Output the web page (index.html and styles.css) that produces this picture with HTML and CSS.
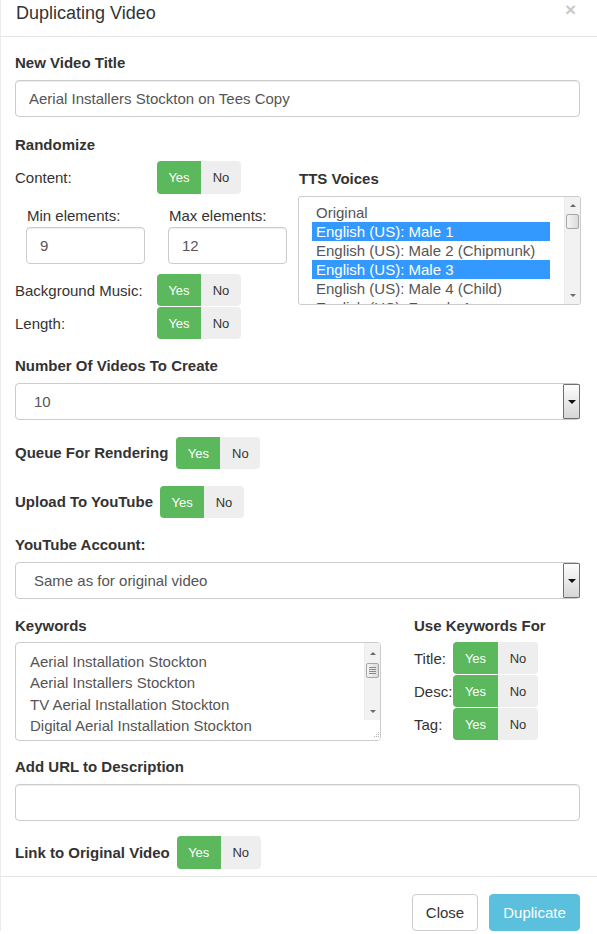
FILE: index.html
```html
<!DOCTYPE html>
<html lang="en">
<head>
<meta charset="utf-8">
<title>Duplicating Video</title>
<link rel="stylesheet" href="styles.css">
</head>
<body>
<div class="modal">
  <div class="modal-header">
    <h4 class="modal-title">Duplicating Video</h4>
    <span class="close">×</span>
  </div>
  <div class="modal-body">
    <div class="label">New Video Title</div>
    <input class="input" type="text" value="Aerial Installers Stockton on Tees Copy">

    <div class="randomize">
      <div class="rand-left">
        <div class="label">Randomize</div>
        <div class="opt-row content-row">
          <span class="row-label">Content:</span>
          <span class="toggle"><span class="yes">Yes</span><span class="no">No</span></span>
        </div>
        <div class="minmax">
          <div class="mm-col">
            <div class="mm-label">Min elements:</div>
            <input class="input small" type="text" value="9">
          </div>
          <div class="mm-col">
            <div class="mm-label">Max elements:</div>
            <input class="input small" type="text" value="12">
          </div>
        </div>
        <div class="opt-row bg-row">
          <span class="row-label">Background Music:</span>
          <span class="toggle"><span class="yes">Yes</span><span class="no">No</span></span>
        </div>
        <div class="opt-row len-row">
          <span class="row-label">Length:</span>
          <span class="toggle"><span class="yes">Yes</span><span class="no">No</span></span>
        </div>
      </div>
      <div class="rand-right">
        <div class="label tts-label">TTS Voices</div>
        <div class="listbox">
          <div class="options">
            <div class="option">Original</div>
            <div class="option selected">English (US): Male 1</div>
            <div class="option">English (US): Male 2 (Chipmunk)</div>
            <div class="option selected">English (US): Male 3</div>
            <div class="option">English (US): Male 4 (Child)</div>
            <div class="option">English (US): Female 1</div>
          </div>
          <div class="scrollbar">
            <div class="sb-up"><span class="arrow-up"></span></div>
            <div class="sb-thumb"></div>
            <div class="sb-track"></div>
            <div class="sb-down"><span class="arrow-down"></span></div>
          </div>
        </div>
      </div>
    </div>

    <div class="label section">Number Of Videos To Create</div>
    <div class="select">
      <span class="select-text">10</span>
      <span class="drop-btn"><span class="arrow-down dark"></span></span>
    </div>

    <div class="inline-row queue-row">
      <span class="label">Queue For Rendering</span>
      <span class="toggle"><span class="yes">Yes</span><span class="no">No</span></span>
    </div>

    <div class="inline-row upload-row">
      <span class="label">Upload To YouTube</span>
      <span class="toggle"><span class="yes">Yes</span><span class="no">No</span></span>
    </div>

    <div class="label section">YouTube Account:</div>
    <div class="select">
      <span class="select-text">Same as for original video</span>
      <span class="drop-btn"><span class="arrow-down dark"></span></span>
    </div>

    <div class="keywords">
      <div class="kw-left">
        <div class="label">Keywords</div>
        <div class="textarea">
          <div class="lines">
            <div class="line">Aerial Installation Stockton</div>
            <div class="line">Aerial Installers Stockton</div>
            <div class="line">TV Aerial Installation Stockton</div>
            <div class="line">Digital Aerial Installation Stockton</div>
          </div>
          <div class="ta-scroll">
            <div class="ta-bar">
              <div class="sb-up tall"><span class="arrow-up"></span></div>
              <div class="sb-thumb grip"><i></i><i></i><i></i><i></i></div>
              <div class="sb-track"></div>
              <div class="sb-down"><span class="arrow-down"></span></div>
            </div>
            <div class="resize-corner">
              <svg width="10" height="10" viewBox="0 0 10 10"><g fill="#b5b5b5"><rect x="8" y="2" width="1" height="1"/><rect x="6" y="4" width="1" height="1"/><rect x="8" y="4" width="1" height="1"/><rect x="4" y="6" width="1" height="1"/><rect x="6" y="6" width="1" height="1"/><rect x="8" y="6" width="1" height="1"/></g></svg>
            </div>
          </div>
        </div>
      </div>
      <div class="kw-right">
        <div class="label">Use Keywords For</div>
        <div class="kw-rows">
          <div class="kw-row">
            <span class="kw-label">Title:</span>
            <span class="toggle"><span class="yes">Yes</span><span class="no">No</span></span>
          </div>
          <div class="kw-row">
            <span class="kw-label">Desc:</span>
            <span class="toggle"><span class="yes">Yes</span><span class="no">No</span></span>
          </div>
          <div class="kw-row">
            <span class="kw-label">Tag:</span>
            <span class="toggle"><span class="yes">Yes</span><span class="no">No</span></span>
          </div>
        </div>
      </div>
    </div>

    <div class="label url-label">Add URL to Description</div>
    <input class="input" type="text" value="">

    <div class="inline-row link-row">
      <span class="label">Link to Original Video</span>
      <span class="toggle tall"><span class="yes">Yes</span><span class="no">No</span></span>
    </div>
  </div>
  <div class="modal-footer">
    <button class="btn btn-default" type="button">Close</button>
    <button class="btn btn-info" type="button">Duplicate</button>
  </div>
</div>
</body>
</html>
```

FILE: styles.css
```css
* { box-sizing: border-box; }

body {
  margin: 0;
  background: #fff;
  color: #333;
  font-family: "Liberation Sans", Arial, sans-serif;
  font-size: 15px;
}

.modal {
  width: 597px;
  border-left: 1px solid #ececec;
}

.modal-header {
  height: 37px;
  display: flex;
  justify-content: space-between;
  align-items: flex-start;
  padding: 3px 21px 0 15px;
  border-bottom: 1px solid #e5e5e5;
}

.modal-title {
  margin: 0;
  font-size: 18px;
  font-weight: normal;
  line-height: 20px;
  color: #333;
}

.close {
  font-size: 19px;
  font-weight: bold;
  line-height: 14px;
  color: #c9c9c9;
  margin-top: 0;
}

.modal-body {
  padding: 16px 17px 7px 14px;
}

.label {
  font-weight: bold;
  font-size: 15px;
  line-height: 20px;
  color: #333;
}

.input {
  display: block;
  width: 100%;
  height: 37px;
  margin: 7px 0 0;
  padding: 0 13px;
  border: 1px solid #ccc;
  border-radius: 4px;
  font: inherit;
  font-size: 15px;
  color: #555;
  background: #fff;
  box-shadow: inset 0 1px 1px rgba(0, 0, 0, .075);
  outline: none;
}

/* Randomize block */
.randomize {
  margin-top: 18px;
  display: grid;
  grid-template-columns: 283px 1fr;
}

.opt-row {
  display: flex;
  align-items: center;
}

.row-label {
  width: 142px;
  font-size: 15px;
}

.content-row { margin-top: 6px; height: 33px; }
.content-row .toggle { height: 33px; }
.bg-row { margin-top: 10px; }
.len-row { margin-top: 1px; }

.minmax {
  margin-top: 12px;
  padding-left: 11px;
  display: grid;
  grid-template-columns: 142px 142px;
}

.mm-label {
  font-size: 15px;
  line-height: 20px;
  padding-left: 1px;
}

.input.small {
  width: 119px;
  margin-top: 1px;
}

.rand-right {
  padding-top: 34px;
}

.tts-label { padding-left: 1px; }

.listbox {
  margin-top: 7px;
  width: 283px;
  height: 109px;
  border: 1px solid #ccc;
  border-radius: 3px;
  display: flex;
  overflow: hidden;
  background: #fff;
}

.options {
  width: 265px;
  padding: 6px 14px 0 13px;
  overflow: hidden;
}

.option {
  height: 19px;
  line-height: 19px;
  padding-left: 4px;
  white-space: nowrap;
  font-size: 15px;
  color: #555;
}

.option.selected {
  background: #3399ff;
  color: #fff;
}

/* fake scrollbars */
.scrollbar, .ta-bar {
  width: 16px;
  display: flex;
  flex-direction: column;
  background: #f2f2f2;
  border-left: 1px solid #ececec;
}

.sb-up, .sb-down {
  height: 17px;
  display: flex;
  align-items: center;
  justify-content: center;
}

.sb-up.tall { height: 20px; }

.sb-thumb {
  height: 15px;
  margin: 0 1px;
  border: 1px solid #a6a6a6;
  border-radius: 2px;
  background: linear-gradient(to right, #f4f4f4, #dcdcdc);
}

.sb-thumb.grip {
  display: flex;
  flex-direction: column;
  justify-content: center;
  align-items: center;
  gap: 1px;
}

.sb-thumb.grip i {
  display: block;
  width: 7px;
  height: 1px;
  background: #8a8a8a;
}

.sb-track { flex: 1; }

.arrow-up, .arrow-down {
  width: 0;
  height: 0;
  border-left: 3px solid transparent;
  border-right: 3px solid transparent;
}

.arrow-up { border-bottom: 3px solid #6a6a6a; }
.arrow-down { border-top: 3px solid #6a6a6a; }
.arrow-down.dark {
  border-left-width: 4px;
  border-right-width: 4px;
  border-top: 4px solid #111;
}

/* select */
.select {
  margin-top: 7px;
  height: 37px;
  display: flex;
  align-items: stretch;
  justify-content: space-between;
  border: 1px solid #ccc;
  border-radius: 4px;
  background: #fff;
}

.select-text {
  padding-left: 18px;
  line-height: 35px;
  font-size: 15px;
  color: #555;
}

.drop-btn {
  width: 17px;
  border: 1px solid #707070;
  border-radius: 1px;
  background: linear-gradient(#fdfdfd, #d6d6d6);
  display: flex;
  align-items: center;
  justify-content: center;
  margin-right: -1px;
}

.section { margin-top: 17px; }

.inline-row {
  display: flex;
  align-items: center;
  gap: 8px;
  margin-top: 17px;
}

.upload-row { gap: 7px; }
.link-row { margin-top: 15px; gap: 7px; }

/* toggle */
.toggle {
  display: inline-flex;
  height: 32px;
  border-radius: 4px;
  overflow: hidden;
  font-size: 13px;
}

.toggle.tall { height: 33px; }

.toggle .yes, .toggle .no {
  display: flex;
  align-items: center;
  justify-content: center;
}

.toggle .yes {
  width: 44px;
  background: #5cb85c;
  color: #fff;
}

.toggle .no {
  width: 40px;
  background: #eee;
  color: #333;
}

/* keywords */
.keywords {
  margin-top: 17px;
  display: grid;
  grid-template-columns: 399px 1fr;
}

.textarea {
  margin-top: 6px;
  width: 366px;
  height: 99px;
  border: 1px solid #ccc;
  border-radius: 4px;
  display: flex;
  overflow: hidden;
}

.lines {
  flex: 1;
  padding: 8px 0 0 14px;
  overflow: hidden;
}

.line {
  line-height: 21.4px;
  white-space: nowrap;
  font-size: 15px;
  color: #555;
}

.ta-scroll {
  width: 16px;
  display: flex;
  flex-direction: column;
}

.ta-bar { flex: 1; }

.resize-corner {
  height: 20px;
  display: flex;
  align-items: flex-end;
  justify-content: flex-end;
  background: #fff;
}

.kw-rows {
  margin-top: 6px;
  display: flex;
  flex-direction: column;
  gap: 1px;
}

.kw-row {
  display: flex;
  align-items: center;
}

.kw-label {
  width: 39px;
  font-size: 15px;
}

.kw-row .yes { width: 45px; }

.url-label { margin-top: 16px; }

/* footer */
.modal-footer {
  display: flex;
  justify-content: flex-end;
  gap: 11px;
  padding: 17px 17px 0 0;
  border-top: 1px solid #e5e5e5;
}

.btn {
  height: 37px;
  border-radius: 4px;
  font: inherit;
  font-size: 15px;
  padding: 0;
  border: 1px solid #ccc;
  cursor: pointer;
}

.btn-default {
  width: 66px;
  background: #fff;
  color: #333;
}

.btn-info {
  width: 91px;
  background: #5bc0de;
  border-color: #5bc0de;
  color: #fff;
}
```
